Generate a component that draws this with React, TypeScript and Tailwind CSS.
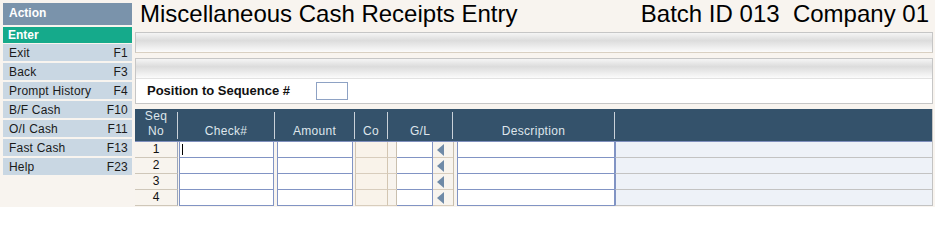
import React from "react";

const menu: [string, string][] = [
  ["Exit", "F1"],
  ["Back", "F3"],
  ["Prompt History", "F4"],
  ["B/F Cash", "F10"],
  ["O/I Cash", "F11"],
  ["Fast Cash", "F13"],
  ["Help", "F23"],
];

function Arrow() {
  return (
    <svg width="8" height="12" viewBox="0 0 8 12" className="block">
      <polygon points="7,0 7,12 0,6" fill="#6f8aa7" />
    </svg>
  );
}

function Row({ n, first }: { n: number; first?: boolean }) {
  return (
    <div className="flex h-[16px] text-[12px] leading-[15px] text-[#111]">
      <div className="w-[43px] border-r border-b border-r-[#9aa6bc] border-b-[#cfc7b9] bg-[#f8f4ee] text-center">
        {n}
      </div>
      <div className="w-[97px] flex bg-[#f8f4ee] pl-[1px]">
        <div className="relative w-[95px] bg-white border-x border-b border-[#8194c4]">
          {first && <div className="absolute left-[2px] top-[2px] w-[1px] h-[11px] bg-black" />}
        </div>
      </div>
      <div className="w-[80px] flex bg-[#f8f4ee] pl-[2px]">
        <div className="w-[76px] bg-white border-x border-b border-[#8194c4]" />
      </div>
      <div className="w-[33px] bg-[#f9f3ea] border-x border-b border-x-[#d3c6b2] border-b-[#d8cdbd]" />
      <div className="w-[65px] flex bg-[#f8f4ee] border-b border-[#d8cdbd]">
        <div className="w-[9px] border-r border-[#c9bfae]" />
        <div className="w-[36px] bg-white border-r border-b border-[#8194c4] -mb-[1px]" />
        <div className="w-[20px] flex items-center pl-[4px]">
          <Arrow />
        </div>
      </div>
      <div className="w-[162px] flex bg-[#f8f4ee] pl-[3px] border-l border-[#c9bfae]">
        <div className="w-[158px] bg-white border-x border-b border-[#8194c4]" />
      </div>
      <div className="flex-1 bg-[#eef2f8] border-l border-b border-l-[#8194c4] border-b-[#c3c3c3]" />
    </div>
  );
}

function HeadCell({ w, children, last }: { w: string; children?: React.ReactNode; last?: boolean }) {
  return (
    <div className={`${w} flex py-[3px]`}>
      <div
        className={`flex-1 flex flex-col justify-end items-center leading-[15px] tracking-[0.3px] -mb-[1px] ${
          last ? "" : "border-r border-[#c9d1d9]"
        }`}
      >
        {children}
      </div>
    </div>
  );
}

export default function App() {
  return (
    <div
      className="w-[935px] h-[207px] bg-[#f8f4ef] flex overflow-hidden"
      style={{ fontFamily: '"Liberation Sans", Arial, sans-serif' }}
    >
      {/* Sidebar */}
      <div className="w-[135px] pl-[3px] pt-[3px] flex flex-col">
        <div className="w-[129px] h-[22px] bg-[#7a93ab] text-white font-bold text-[12px] leading-[20px] pl-[6px]">
          Action
        </div>
        <div className="w-[129px] h-[16px] mt-[2px] bg-[#15aa8b] text-white font-bold text-[12px] leading-[16px] pl-[5px]">
          Enter
        </div>
        <div className="mt-[1px] flex flex-col gap-[2px]">
          {menu.map(([l, k]) => (
            <div
              key={l}
              className="w-[129px] h-[17px] bg-[#c9d7e3] flex justify-between items-center pl-[6px] pr-[4px] text-[12px] tracking-[0.2px] text-[#1a1a1a]"
            >
              <span>{l}</span>
              <span>{k}</span>
            </div>
          ))}
        </div>
      </div>

      {/* Main */}
      <div className="w-[798px] flex flex-col">
        <div className="h-[32px] flex justify-between items-start pl-[5px] pr-[4px] text-[24px] leading-[28px] text-black">
          <span>Miscellaneous Cash Receipts Entry</span>
          <span className="whitespace-pre">Batch ID 013  Company 01</span>
        </div>
        <div className="h-[21px] border border-[#c6c6c6] border-b-[#d9d0c2] bg-[linear-gradient(180deg,#f5f5f5_0%,#dcdcdc_40%,#fbfbfb_100%)]" />
        <div className="mt-[5px] border-x border-b border-[#c6c6c6] bg-white">
          <div className="h-[20px] border-t border-[#c6c6c6] bg-[linear-gradient(180deg,#f5f5f5_0%,#dcdcdc_40%,#fbfbfb_100%)]" />
          <div className="h-[25px] flex items-center border-t border-[#e2e2e2]">
            <span className="ml-[11px] font-bold text-[13px] text-[#111] w-[169px]">Position to Sequence #</span>
            <div className="w-[32px] h-[18px] border border-[#8ea2c4] bg-white" />
          </div>
        </div>

        {/* Table */}
        <div className="mt-[5px] w-[798px] border-r border-[#c3c3c3]">
          <div className="h-[33px] flex bg-[#34526b] border-b border-[#7f8fbd] text-[12px] text-[#dfe6ec]">
            <HeadCell w="w-[43px]">
              <span>Seq</span>
              <span>No</span>
            </HeadCell>
            <HeadCell w="w-[97px]">Check#</HeadCell>
            <HeadCell w="w-[80px]">Amount</HeadCell>
            <HeadCell w="w-[33px]">Co</HeadCell>
            <HeadCell w="w-[65px]">G/L</HeadCell>
            <HeadCell w="w-[162px]">Description</HeadCell>
            <HeadCell w="flex-1" last />
          </div>
          <Row n={1} first />
          <Row n={2} />
          <Row n={3} />
          <Row n={4} />
        </div>
      </div>
    </div>
  );
}
